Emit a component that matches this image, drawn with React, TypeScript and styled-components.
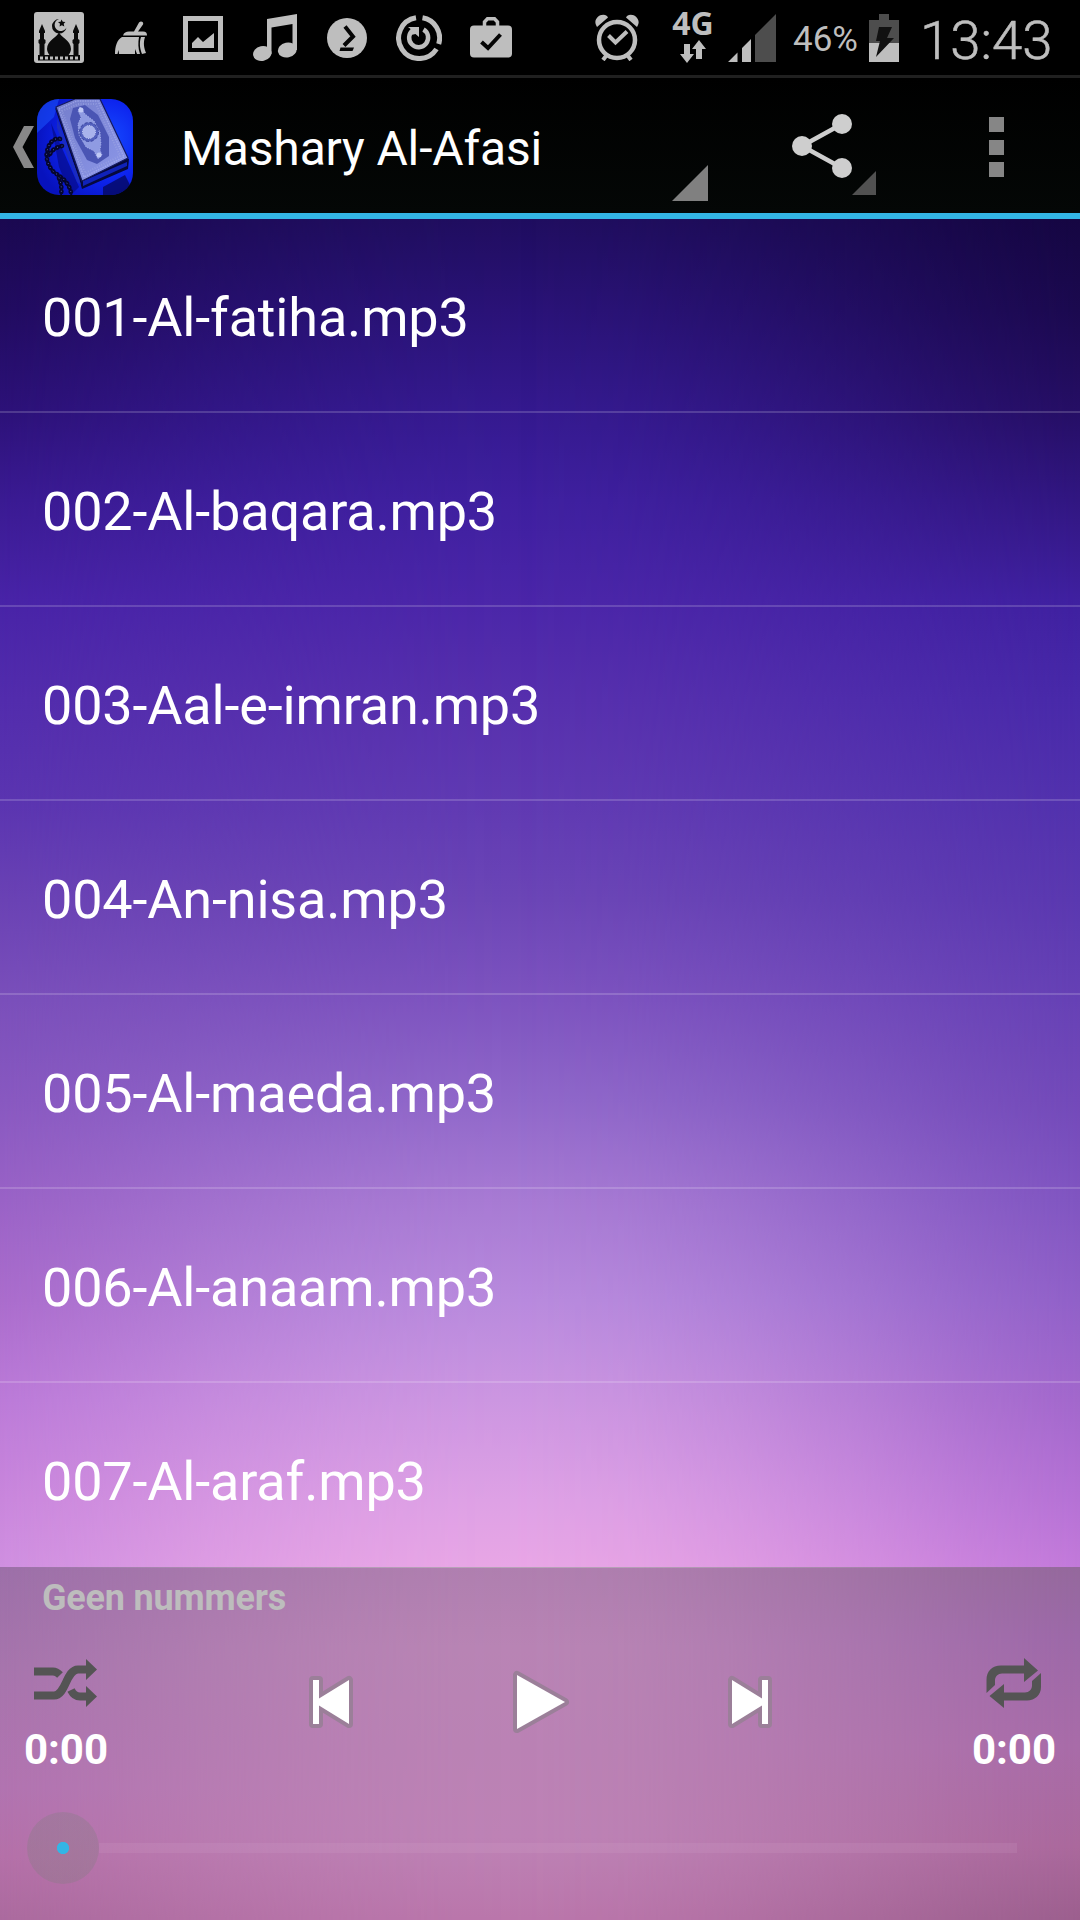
import React from 'react';
import styled, { createGlobalStyle } from 'styled-components';

const Global = createGlobalStyle`
  *, *::before, *::after { box-sizing: border-box; }
  body { margin: 0; background: #000; font-family: Roboto, "Noto Sans", sans-serif; }
`;

const centerSky = `linear-gradient(180deg,#200e60 0,#2a1378 91px,#351a90 191px,#3f20a0 281px,#4b26a9 381px,#5730ae 481px,#603ab3 581px,#6c46b7 681px,#7e54c0 781px,#9068ca 881px,#a87bd4 981px,#b98bde 1081px,#cd97e2 1181px,#dfa2e6 1281px,#e9a7e6 1348px)`;
const leftSky = `linear-gradient(180deg,#1a0850 0,#210b60 91px,#2c1178 191px,#3a1a92 281px,#4823a7 381px,#522cac 481px,#5a34b0 581px,#6a42b4 681px,#7a4fba 781px,#8858c0 881px,#9962c6 981px,#aa6ccc 1081px,#bb7ad8 1181px,#c986dc 1281px,#cf8fe0 1348px)`;
const rightSky = `linear-gradient(180deg,#150642 0,#1b094f 91px,#250e64 191px,#311681 281px,#3f20a0 381px,#4829a9 481px,#5131ad 581px,#5a38b0 681px,#6641b5 781px,#7249b9 881px,#8055c1 981px,#9060c8 1081px,#a267cc 1181px,#b571d5 1281px,#c279da 1348px)`;
const centerPanel = `linear-gradient(180deg,#b080b0 0,#b985b5 80px,#bb83b5 180px,#be83b6 270px,#bb77ac 351px)`;
const leftPanel = `linear-gradient(180deg,#9c6fa8 0,#a674ac 100px,#b173b0 220px,#b470a8 290px,#ab6a9e 351px)`;
const rightPanel = `linear-gradient(180deg,#94689c 0,#9c68a8 70px,#a86ba8 180px,#aa689c 280px,#9c5f8e 351px)`;

const Wash = styled.div<{ $left: string; $center: string; $right: string }>`
  position: relative;
  isolation: isolate;
  background: ${(p) => p.$center};
  &::before, &::after {
    content: '';
    position: absolute;
    inset: 0;
    z-index: -1;
  }
  &::before {
    background: ${(p) => p.$left};
    mask-image: linear-gradient(90deg, #000 0, rgba(0,0,0,.72) 10%, rgba(0,0,0,.42) 20%, rgba(0,0,0,.16) 32%, rgba(0,0,0,.04) 42%, transparent 50%);
  }
  &::after {
    background: ${(p) => p.$right};
    mask-image: linear-gradient(270deg, #000 0, rgba(0,0,0,.8) 10%, rgba(0,0,0,.54) 20%, rgba(0,0,0,.26) 32%, rgba(0,0,0,.08) 42%, transparent 52%);
  }
`;

const Screen = styled.div`
  width: 1080px;
  height: 1920px;
  display: flex;
  flex-direction: column;
  overflow: hidden;
`;

const StatusBar = styled.header`
  height: 78px;
  display: flex;
  justify-content: space-between;
  background: #000;
  border-bottom: 3px solid #202020;
  color: #bebebe;
`;
const StatusGroup = styled.div<{ $pl?: number; $pr?: number }>`
  display: flex;
  align-items: center;
  height: 75px;
  padding-left: ${(p) => p.$pl ?? 0}px;
  padding-right: ${(p) => p.$pr ?? 0}px;
`;
const Glyph = styled.svg<{ $gap?: number }>`
  display: block;
  flex: none;
  margin-left: ${(p) => p.$gap ?? 0}px;
`;
const Network = styled.div`
  display: flex;
  flex-direction: column;
  align-items: center;
  width: 42px;
  height: 75px;
  padding-top: 6px;
  margin-left: 33px;
  font: 700 32px/34px "Noto Sans", sans-serif;
`;
const Percent = styled.span`
  width: 66px;
  margin-left: 17px;
  padding-top: 4px;
  font-size: 35px;
  line-height: 40px;
  white-space: nowrap;
`;
const Clock = styled.span`
  width: 130px;
  margin-left: 21px;
  padding-top: 5px;
  font-size: 54.5px;
  font-weight: 300;
  line-height: 60px;
  white-space: nowrap;
  -webkit-text-stroke: 0.6px #bebebe;
`;

const ActionBar = styled.nav`
  height: 141px;
  display: flex;
  align-items: center;
  background: linear-gradient(#000, #040706);
  border-bottom: 6px solid #33b5e5;
`;
const BarButton = styled.button<{ $width: number; $inset: number; $drop?: number }>`
  flex: none;
  width: ${(p) => p.$width}px;
  height: 135px;
  padding: ${(p) => p.$drop ?? 0}px 0 0 ${(p) => p.$inset}px;
  border: 0;
  background: none;
  display: flex;
  align-items: center;
`;
const Title = styled.h1`
  flex: none;
  width: 492px;
  height: 135px;
  margin: 0;
  padding-left: 1px;
  color: #fff;
  font-size: 48px;
  line-height: 141px;
  font-weight: 400;
  letter-spacing: -0.15px;
  white-space: nowrap;
`;
const Corner = styled.span<{ $size: number; $color: string; $lift: number }>`
  align-self: flex-end;
  flex: none;
  width: ${(p) => p.$size}px;
  height: ${(p) => p.$size}px;
  margin-bottom: ${(p) => p.$lift}px;
  background: ${(p) => p.$color};
  clip-path: polygon(100% 0, 100% 100%, 0 100%);
`;
const Dots = styled.span`
  display: grid;
  gap: 7.5px;
`;
const Dot = styled.i`
  width: 15px;
  height: 15px;
  background: #868686;
`;

const List = styled(Wash).attrs({ as: 'ul' })`
  flex: none;
  height: 1348px;
  margin: 0;
  padding: 0;
  list-style: none;
  overflow: hidden;
`;
const Track = styled.li`
  height: 194px;
  padding-left: 42px;
  border-bottom: 2px solid rgba(255, 255, 255, 0.17);
  color: #fff;
  font-size: 54px;
  line-height: 197px;
  letter-spacing: -0.17px;
  white-space: nowrap;
`;

const Player = styled(Wash).attrs({ as: 'section' })`
  flex: 1;
  display: flex;
  flex-direction: column;
  box-shadow: inset 0 1px rgba(190, 190, 190, 0.6);
`;
const NowPlaying = styled.div`
  height: 63px;
  padding-left: 42px;
  color: #bdbdbd;
  font-size: 36px;
  font-weight: 700;
  line-height: 63px;
  letter-spacing: -0.2px;
`;
const Controls = styled.div`
  display: grid;
  grid-template-columns: 132px 1fr 132px;
  height: 146px;
`;
const Side = styled.div`
  display: flex;
  flex-direction: column;
  align-items: center;
  padding-top: 28px;
`;
const Time = styled.span`
  margin-top: 14px;
  color: #fff;
  font-size: 42px;
  font-weight: 700;
  line-height: 56px;
`;
const Transport = styled.div`
  display: flex;
  justify-content: space-between;
  align-items: center;
  padding: 0 175px 4px 176px;
`;
const Seek = styled.div`
  flex: 1;
  display: flex;
  align-items: center;
  padding: 0 63px 1px 27px;
`;
const Thumb = styled.span`
  flex: none;
  width: 72px;
  height: 72px;
  border-radius: 50%;
  background: radial-gradient(circle, #33b5e5 0 5.7px, rgba(125, 125, 125, 0.3) 6.5px);
`;
const Rail = styled.span`
  flex: 1;
  height: 10px;
  background: rgba(220, 175, 215, 0.14);
`;

const MosqueIcon = () => (
  <Glyph width="50" height="51" viewBox="0 0 50 51">
    <rect width="50" height="51" rx="3" fill="#bebebe" />
    <g fill="#0b0b0b">
      <path d="M25 7a7.300 7.300 0 1 0 7.500 8.500A6.200 6.200 0 1 1 25 7z" />
      <path d="m27.500 7.500 1.300 2.200 2.600.2-1.700 1.900.6 2.600-2.400-1.200-2.300 1.300.4-2.700-2-1.700 2.600-.4z" />
      <path d="M25 20c1 5 12 8 12 17 0 3-2 5-3 7H16c-1-2-3-4-3-7 0-9 11-12 12-17z" />
      {[8, 42].map((x) => (
        <path key={x} d={`M${x} 12l3 7v2h-1v6l1.500 1v3l-1 1v11h-5V32l-1-1v-3l1.500-1v-6h-1v-2z`} />
      ))}
      <path d="M4 43h42v5.500H4z" />
    </g>
    <path d="M6 46h38" stroke="#bebebe" strokeWidth="3" strokeDasharray="3 2" />
  </Glyph>
);
const BroomIcon = () => (
  <Glyph $gap={31} width="32" height="34" viewBox="0 0 32 34" fill="#bebebe">
    <path d="M24 1.500c2-2 5-.5 4 2L23 10.500h5c3 0 4 1.500 4 4H8c1-3 3-4 6-4h5z" />
    <path d="M7 16h17c-1 6-1 11 1 17h-3l-2-5v5H4l-.5-4-1 4H0c0-8 2-14 7-17z" />
    <path d="M26 16h4c-2 6-1 11 1 16l-4 1c-2-5-3-11-1-17z" />
  </Glyph>
);
const PictureIcon = () => (
  <Glyph $gap={36} width="40" height="44" viewBox="0 0 40 44">
    <path fill="#bebebe" fillRule="evenodd" d="M0 0h40v44H0zM5 5v31h30V5z" />
    <path fill="#bebebe" d="M9 32v-5l6-6 5 5 11-9v15z" />
  </Glyph>
);
const MusicIcon = () => (
  <Glyph $gap={30} width="44" height="48" viewBox="0 0 44 48" fill="#bebebe">
    <path d="M14 5 44 0v36h-4.500V10L18.500 13.500V40H14z" />
    <ellipse cx="9.300" cy="39.500" rx="9.300" ry="7.500" transform="rotate(-12 9.300 39.500)" />
    <ellipse cx="34.300" cy="36" rx="9.500" ry="7.500" transform="rotate(-12 34.300 36)" />
  </Glyph>
);
const ShellIcon = () => (
  <Glyph $gap={30} width="40" height="40" viewBox="0 0 40 40">
    <circle cx="20" cy="20" r="20" fill="#bebebe" />
    <path d="M18 8.500 26 18.500l-9 9" fill="none" stroke="#050505" strokeWidth="4" />
    <path d="M13.500 29.500H27l-1.500 3.500h-13z" fill="#050505" />
  </Glyph>
);
const RestartIcon = () => (
  <Glyph $gap={29} width="46" height="46" viewBox="0 0 46 46" fill="none" stroke="#bebebe">
    <path d="M26.500 2.800A20.500 20.500 0 0 1 42.700 29M40.500 34A20.500 20.500 0 1 1 20 2.800" strokeWidth="5" />
    <path d="M27.500 14.500A9.500 9.500 0 1 1 17 15" strokeWidth="4.500" />
    <path d="M12 12h11v10l-3.500-3-4.500 1 1.500-4.500z" fill="#bebebe" stroke="none" />
  </Glyph>
);
const BagIcon = () => (
  <Glyph $gap={28} width="42" height="41" viewBox="0 0 42 41">
    <path d="M14.500 10V5l3-3.200h7L27.500 5v5" fill="none" stroke="#bebebe" strokeWidth="3.500" />
    <rect y="8.500" width="42" height="32" rx="4" fill="#bebebe" />
    <path d="m11.500 25 6.500 6 12.500-13.500" fill="none" stroke="#050505" strokeWidth="4" />
  </Glyph>
);
const AlarmIcon = () => (
  <Glyph width="44" height="47" viewBox="0 0 44 47" fill="none" stroke="#bebebe">
    <circle cx="22" cy="26" r="18" strokeWidth="4.500" />
    <path d="m13.500 21.500 7 7 11.500-11" strokeWidth="4" />
    <path d="m11 42-3 4M33 42l3 4" strokeWidth="4" />
    <path d="M1 11c-3-6 5-13 11-9l1 1.500L2 13zM43 11c3-6-5-13-11-9l-1 1.500L42 13z" fill="#bebebe" stroke="none" />
  </Glyph>
);
const DataIcon = () => (
  <Glyph width="26" height="23" viewBox="0 0 26 23" fill="#bebebe">
    <path d="M4 4h6v10h4l-7 9-7-9h4z" />
    <path d="M16 19V9h-4l7-9 7 9h-4v10z" />
  </Glyph>
);
const SignalIcon = () => (
  <Glyph $gap={14} width="48" height="48" viewBox="0 0 48 48" fill="#bebebe">
    <path d="M0 48 9.500 38.500V48zM14 34l9-9v23h-9z" />
    <path d="M27 21 48 0v48H27z" fill="#4d4d4d" />
  </Glyph>
);
const BatteryIcon = () => (
  <Glyph $gap={10} width="30" height="48" viewBox="0 0 30 48">
    <path d="M0 6h10V0h10v6h10v23H0z" fill="#4d4d4d" />
    <path d="M0 29h30v19H0z" fill="#bebebe" />
    <path d="M10 13h13l-5 11h7L7 43l4-16H7z" fill="#111" />
  </Glyph>
);

const Beads = ({ d }: { d: string }) => (
  <>
    <path d={d} fill="none" stroke="#05062c" strokeWidth="2" />
    <path d={d} fill="none" stroke="#05062c" strokeWidth="4.600" strokeLinecap="round" strokeDasharray=".6 4" />
    <path d={d} fill="none" stroke="#5d68c8" strokeWidth="1" strokeLinecap="round" strokeDasharray=".1 4.500" />
  </>
);
const AppIcon = () => (
  <Glyph $gap={3} width="96" height="96" viewBox="0 0 96 96">
    <defs>
      <clipPath id="tile"><rect width="96" height="96" rx="22" /></clipPath>
      <radialGradient id="cloth" cx=".72" cy=".42" r=".75">
        <stop offset="0" stopColor="#164cff" />
        <stop offset=".55" stopColor="#0d24ee" />
        <stop offset="1" stopColor="#0712bd" />
      </radialGradient>
      <linearGradient id="cover" x1="0" y1="0" x2="1" y2="1">
        <stop offset="0" stopColor="#747dcb" />
        <stop offset="1" stopColor="#8d98ea" />
      </linearGradient>
    </defs>
    <g clipPath="url(#tile)">
      <rect width="96" height="96" fill="url(#cloth)" />
      <path d="M0 0h22l-5 18L0 34z" fill="#1c55ff" opacity=".55" />
      <path d="M14 24 42 88l-8 8-12-28z" fill="#05087a" opacity=".6" />
      <path d="M66 88l22-12 6 12-10 8H66z" fill="#040650" opacity=".7" />
      <path d="M18 9 43 83l2 7 46-20 1-10-10-4z" fill="#06093d" />
      <path d="m46 87 44-20v-4L46 82z" fill="#1022b8" />
      <path d="m20 19 22 60 2 7-4-3-20-54z" fill="#1a2cc0" />
      <path d="M19 8 38 0h25l28 59-46 23z" fill="url(#cover)" stroke="#14195e" strokeWidth="1.200" />
      <path d="M22 10 40 2h21l26 56-40 20z" fill="none" stroke="#b5bef5" strokeWidth="1.500" strokeDasharray="1.500 1" opacity=".5" />
      <path d="M25 12 41 5h18l24 52-35 17z" fill="none" stroke="#a3ace6" strokeWidth="2" strokeDasharray="1 1.500" opacity=".5" />
      <path d="m36 9 12-3 13 10 11 22 0 19-12 8-10-4-12-22-5-19z" fill="#4a55b4" />
      <path d="m43 8 5 7 9 7 6 11 1 12-1 6 2 5-4 4-4-8-8-4-7-12-1-11 3-7-3-6z" fill="#8f9be2" stroke="#b5bdf0" strokeWidth=".8" strokeDasharray="1 1.500" />
      <circle cx="52" cy="33" r="9.500" fill="#5360bd" stroke="#39439f" strokeDasharray="3 2" />
      <circle cx="52" cy="33" r="6.500" fill="#a9b3ec" stroke="#dbe0ff" strokeDasharray="1 1.500" />
      <circle cx="44" cy="11" r="2.500" fill="#c0c9f5" />
      <circle cx="62" cy="56" r="2.500" fill="#c0c9f5" />
      <Beads d="M23 40C16 38 10 46 9.500 57c1 8 4 14 10 18 7 4 14 11 15 22" />
      <Beads d="M25 47c-6 1-12 5-13 11M22 79c2 5 3 10 2 17" />
    </g>
  </Glyph>
);
const BackIcon = () => (
  <Glyph width="21" height="42" viewBox="0 0 21 42">
    <path d="M11 0h10L9.500 21 21 42H11L0 21z" fill="#888" />
  </Glyph>
);
const ShareIcon = () => (
  <Glyph width="60" height="64" viewBox="0 0 60 64" fill="#cecece">
    <path d="M50 10 10 32l40 22" fill="none" stroke="#cecece" strokeWidth="4.500" />
    <circle cx="50" cy="10" r="10" />
    <circle cx="10" cy="32" r="10" />
    <circle cx="50" cy="54" r="10" />
  </Glyph>
);
const ShuffleIcon = () => (
  <Glyph width="64" height="50" viewBox="0 -1 64 50">
    <g fill="none" stroke="#545454" strokeWidth="8">
      <path d="M0 36.500h20C32 36.500 32 10.500 44 10.500h10" />
      <path d="M0 12.500h19c3 0 5 1.500 7 3.500M37 31c2 4 5 6.500 9 6.500h8" />
    </g>
    <path d="m52 0 11 10.500L52 21zM52 27l11 10.500L52 48z" fill="#545454" />
  </Glyph>
);
const RepeatIcon = () => (
  <Glyph width="56" height="50" viewBox="0 0 56 50" fill="#545454">
    <path d="M38 0 52 12.500 38 24v-8.500H16c-4 0-7 3-7 7V27l-8.500 8V22C.5 13 6 7.500 15 7.500h23z" />
    <path d="M18 50 3.500 38 18 26v8.500h21c4 0 7-3 7-7V23l9-8v14c0 8-6 13.500-14 13.500H18z" />
  </Glyph>
);
const outline = { fill: '#fff', stroke: '#9b7f99', strokeWidth: 8, strokeLinejoin: 'round' as const, paintOrder: 'stroke' };
const PrevIcon = () => (
  <Glyph width="46" height="54" viewBox="0 0 46 54">
    <path {...outline} d="M5 5h6v18.500L41 5v44L11 30.500V49H5z" />
  </Glyph>
);
const NextIcon = () => (
  <Glyph width="46" height="54" viewBox="0 0 46 54">
    <path {...outline} d="M41 5h-6v18.500L5 5v44l30-18.500V49h6z" />
  </Glyph>
);
const PlayIcon = () => (
  <Glyph width="58" height="64" viewBox="0 0 58 64">
    <path {...outline} d="M5 5v54l48-27z" />
  </Glyph>
);

const tracks = [
  '001-Al-fatiha.mp3',
  '002-Al-baqara.mp3',
  '003-Aal-e-imran.mp3',
  '004-An-nisa.mp3',
  '005-Al-maeda.mp3',
  '006-Al-anaam.mp3',
  '007-Al-araf.mp3',
];

export default function App() {
  return (
    <Screen>
      <Global />
      <StatusBar>
        <StatusGroup $pl={34}>
          <MosqueIcon />
          <BroomIcon />
          <PictureIcon />
          <MusicIcon />
          <ShellIcon />
          <RestartIcon />
          <BagIcon />
        </StatusGroup>
        <StatusGroup $pr={30}>
          <AlarmIcon />
          <Network>
            4G
            <DataIcon />
          </Network>
          <SignalIcon />
          <Percent>46%</Percent>
          <BatteryIcon />
          <Clock>13:43</Clock>
        </StatusGroup>
      </StatusBar>
      <ActionBar>
        <BarButton $width={180} $inset={13} $drop={3}>
          <BackIcon />
          <AppIcon />
        </BarButton>
        <Title>Mashary Al-Afasi</Title>
        <Corner $size={36} $color="#808080" $lift={12} />
        <BarButton $width={144} $inset={84}>
          <ShareIcon />
        </BarButton>
        <Corner $size={24} $color="#515151" $lift={18} />
        <BarButton $width={204} $inset={113} $drop={3}>
          <Dots>
            <Dot />
            <Dot />
            <Dot />
          </Dots>
        </BarButton>
      </ActionBar>
      <List $left={leftSky} $center={centerSky} $right={rightSky}>
        {tracks.map((name) => (
          <Track key={name}>{name}</Track>
        ))}
      </List>
      <Player $left={leftPanel} $center={centerPanel} $right={rightPanel}>
        <NowPlaying>Geen nummers</NowPlaying>
        <Controls>
          <Side>
            <ShuffleIcon />
            <Time>0:00</Time>
          </Side>
          <Transport>
            <PrevIcon />
            <PlayIcon />
            <NextIcon />
          </Transport>
          <Side>
            <RepeatIcon />
            <Time>0:00</Time>
          </Side>
        </Controls>
        <Seek>
          <Thumb />
          <Rail />
        </Seek>
      </Player>
    </Screen>
  );
}
